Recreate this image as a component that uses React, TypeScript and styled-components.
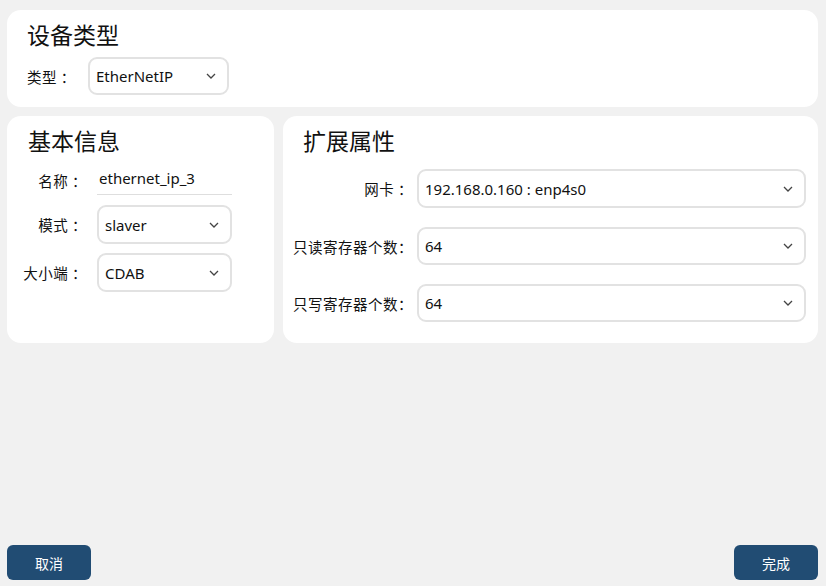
import React from "react";
import styled, { createGlobalStyle } from "styled-components";

const Global = createGlobalStyle`
  html, body { margin: 0; padding: 0; }
  body {
    background: #f1f1f1;
    font-family: "Noto Sans", "Noto Sans CJK SC", sans-serif;
    color: #111;
  }
`;

const Page = styled.div`
  box-sizing: border-box;
  height: 586px;
  display: flex;
  flex-direction: column;
  padding: 10px 8px 6px 7px;
`;

const Card = styled.section<{ $pt?: number; $pr?: number; $pl?: number; $pb?: number }>`
  box-sizing: border-box;
  background: #fff;
  border-radius: 14px;
  padding: ${(p) => p.$pt ?? 12}px ${(p) => p.$pr ?? 20}px ${(p) => p.$pb ?? 10}px
    ${(p) => p.$pl ?? 20}px;
  display: flex;
  flex-direction: column;
`;

const Title = styled.h2`
  margin: 0;
  font-size: 23px;
  line-height: 30px;
  font-weight: 400;
  font-family: "Noto Sans CJK SC", sans-serif;
`;

const Grid = styled.div`
  display: grid;
  grid-template-columns: 267px 1fr;
  gap: 9px;
  margin-top: 9px;
  height: 227px;
`;

const Rows = styled.div<{ $gap: number; $mt: number }>`
  display: flex;
  flex-direction: column;
  gap: ${(p) => p.$gap}px;
  margin-top: ${(p) => p.$mt}px;
`;

const Row = styled.div<{ $gap: number; $mt?: number; $mb?: number }>`
  display: flex;
  align-items: center;
  gap: ${(p) => p.$gap}px;
  margin-top: ${(p) => p.$mt ?? 0}px;
  margin-bottom: ${(p) => p.$mb ?? 0}px;
`;

const Label = styled.span<{ $w: number; $align?: string; $ml?: number }>`
  width: ${(p) => p.$w}px;
  margin-left: ${(p) => p.$ml ?? 0}px;
  flex: none;
  text-align: ${(p) => p.$align ?? "right"};
  font-size: 14.5px;
  letter-spacing: 0.5px;
  white-space: pre;
  font-family: "Noto Sans CJK SC", sans-serif;
`;

const SelectBox = styled.div<{ $w?: number; $h?: number }>`
  box-sizing: border-box;
  ${(p) => (p.$w ? `width: ${p.$w}px; flex: none;` : "flex: 1;")}
  height: ${(p) => p.$h ?? 38}px;
  border: 2px solid #e2e2e2;
  border-radius: 9px;
  display: flex;
  align-items: center;
  justify-content: space-between;
  padding: 0 11px 0 6px;
  font-size: 15px;
  color: #111;
`;

const TextInput = styled.div`
  box-sizing: border-box;
  width: 135px;
  height: 30px;
  border-bottom: 1px solid #dedede;
  display: flex;
  align-items: center;
  padding: 0 0 3px 2px;
  font-size: 15px;
`;

const Spacer = styled.div`
  flex: 1;
`;

const Footer = styled.div`
  display: flex;
  justify-content: space-between;
`;

const Button = styled.button`
  width: 84px;
  height: 35px;
  border: none;
  border-radius: 6px;
  background: #214c73;
  color: #fff;
  font-size: 14px;
  font-family: "Noto Sans CJK SC", sans-serif;
`;

const Chevron = () => (
  <svg width="10" height="6" viewBox="0 0 10 6" fill="none">
    <path d="M1 1l4 4 4-4" stroke="#444" strokeWidth="1.3" />
  </svg>
);

const Select = ({ value, w, h }: { value: string; w?: number; h?: number }) => (
  <SelectBox $w={w} $h={h}>
    <span>{value}</span>
    <Chevron />
  </SelectBox>
);

export default function App() {
  return (
    <>
      <Global />
      <Page>
        <Card $pt={9} $pb={12}>
          <Title>设备类型</Title>
          <Row $gap={12} $mt={8}>
            <Label $w={49} $align="left">类型 ：</Label>
            <Select value="EtherNetIP" w={141} />
          </Row>
        </Card>
        <Grid>
          <Card $pt={9} $pl={21} $pr={20}>
            <Title>基本信息</Title>
            <Rows $gap={9} $mt={10}>
              <Row $gap={10} $mb={1}>
                <Label $w={66} $ml={-7}>名称 ：</Label>
                <TextInput>ethernet_ip_3</TextInput>
              </Row>
              <Row $gap={10}>
                <Label $w={66} $ml={-7}>模式 ：</Label>
                <Select value="slaver" w={135} h={39} />
              </Row>
              <Row $gap={10}>
                <Label $w={66} $ml={-7}>大小端 ：</Label>
                <Select value="CDAB" w={135} h={39} />
              </Row>
            </Rows>
          </Card>
          <Card $pt={9} $pl={20} $pr={12}>
            <Title>扩展属性</Title>
            <Rows $gap={19} $mt={14}>
              <Row $gap={4}>
                <Label $w={121} $ml={-11}>网卡 ：</Label>
                <Select value="192.168.0.160 : enp4s0" h={39} />
              </Row>
              <Row $gap={4}>
                <Label $w={121} $ml={-11}>只读寄存器个数：</Label>
                <Select value="64" h={38} />
              </Row>
              <Row $gap={4}>
                <Label $w={121} $ml={-11}>只写寄存器个数：</Label>
                <Select value="64" h={38} />
              </Row>
            </Rows>
          </Card>
        </Grid>
        <Spacer />
        <Footer>
          <Button>取消</Button>
          <Button>完成</Button>
        </Footer>
      </Page>
    </>
  );
}
